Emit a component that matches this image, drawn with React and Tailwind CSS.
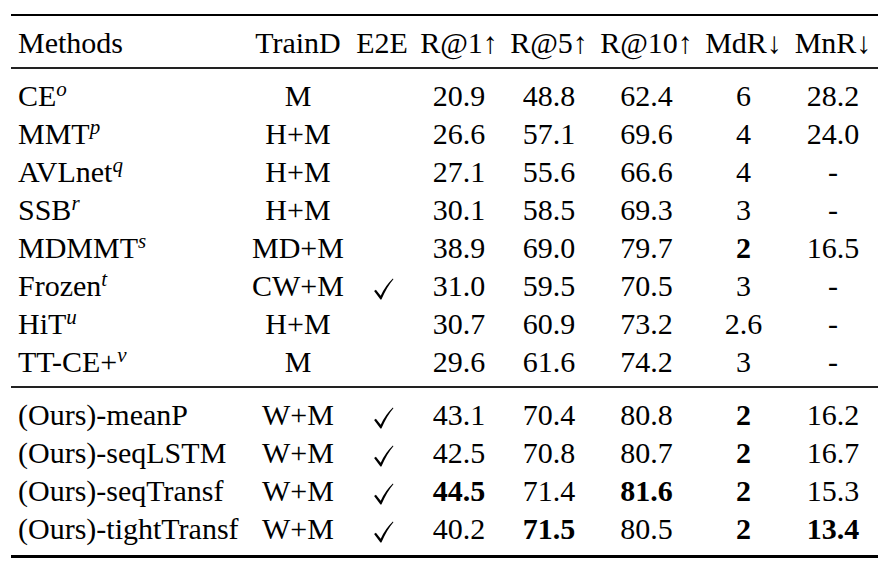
import React from 'react';

const Check = () => (
  <svg width="21" height="22" viewBox="0 0 20 22" className="inline-block">
    <path d="M0.6 13 L2.4 11.8 L7.2 17.8 Q12 7.5 19.4 0.6 L19.9 1.2 Q13.4 8.6 7.9 21.6 L6.9 21.6 Z" fill="#000" />
  </svg>
);

const prior = [
  { name: 'CE', sup: 'o', data: 'M', e2e: false, r1: '20.9', r5: '48.8', r10: '62.4', mdr: '6', mnr: '28.2' },
  { name: 'MMT', sup: 'p', data: 'H+M', e2e: false, r1: '26.6', r5: '57.1', r10: '69.6', mdr: '4', mnr: '24.0' },
  { name: 'AVLnet', sup: 'q', data: 'H+M', e2e: false, r1: '27.1', r5: '55.6', r10: '66.6', mdr: '4', mnr: '-' },
  { name: 'SSB', sup: 'r', data: 'H+M', e2e: false, r1: '30.1', r5: '58.5', r10: '69.3', mdr: '3', mnr: '-' },
  { name: 'MDMMT', sup: 's', data: 'MD+M', e2e: false, r1: '38.9', r5: '69.0', r10: '79.7', mdr: '2', mnr: '16.5', bold: ['mdr'] },
  { name: 'Frozen', sup: 't', data: 'CW+M', e2e: true, r1: '31.0', r5: '59.5', r10: '70.5', mdr: '3', mnr: '-' },
  { name: 'HiT', sup: 'u', data: 'H+M', e2e: false, r1: '30.7', r5: '60.9', r10: '73.2', mdr: '2.6', mnr: '-' },
  { name: 'TT-CE+', sup: 'v', data: 'M', e2e: false, r1: '29.6', r5: '61.6', r10: '74.2', mdr: '3', mnr: '-' },
];

const ours = [
  { name: '(Ours)-meanP', data: 'W+M', e2e: true, r1: '43.1', r5: '70.4', r10: '80.8', mdr: '2', mnr: '16.2', bold: ['mdr'] },
  { name: '(Ours)-seqLSTM', data: 'W+M', e2e: true, r1: '42.5', r5: '70.8', r10: '80.7', mdr: '2', mnr: '16.7', bold: ['mdr'] },
  { name: '(Ours)-seqTransf', data: 'W+M', e2e: true, r1: '44.5', r5: '71.4', r10: '81.6', mdr: '2', mnr: '15.3', bold: ['r1', 'r10', 'mdr'] },
  { name: '(Ours)-tightTransf', data: 'W+M', e2e: true, r1: '40.2', r5: '71.5', r10: '80.5', mdr: '2', mnr: '13.4', bold: ['r5', 'mdr', 'mnr'] },
];

const grid = 'grid grid-cols-[235px_104px_64px_90px_90px_105px_89px_90px] h-[38px] leading-[38px] whitespace-nowrap';

const Row = ({ row }) => {
  const b = (k) => (row.bold && row.bold.includes(k) ? 'font-bold' : '');
  return (
    <div className={grid}>
      <div className="pl-[7px]">
        {row.name}
        {row.sup && <sup className="italic text-[21px]">{row.sup}</sup>}
      </div>
      <div className="text-center">{row.data}</div>
      <div className="text-center pl-[3px]">{row.e2e && <Check />}</div>
      <div className={`text-center ${b('r1')}`}>{row.r1}</div>
      <div className={`text-center ${b('r5')}`}>{row.r5}</div>
      <div className={`text-center ${b('r10')}`}>{row.r10}</div>
      <div className={`text-center ${b('mdr')}`}>{row.mdr}</div>
      <div className={`text-center ${b('mnr')}`}>{row.mnr}</div>
    </div>
  );
};

export default function App() {
  return (
    <div className="w-[891px] h-[571px] bg-white text-black pt-[14px] pl-[11px] font-['Liberation_Serif','Times_New_Roman',serif] text-[30px]">
      <div className="w-[867px]">
        {/* top rule */}
        <div className="h-[2px] bg-black" />

        {/* header */}
        <div className="pt-[8px] pb-[5px]">
          <div className={grid}>
            <div className="pl-[7px]">Methods</div>
            <div className="text-center">TrainD</div>
            <div className="text-center">E2E</div>
            <div className="text-center">R@1↑</div>
            <div className="text-center">R@5↑</div>
            <div className="text-center">R@10↑</div>
            <div className="text-center">MdR↓</div>
            <div className="text-center">MnR↓</div>
          </div>
        </div>
        <div className="h-[2px] bg-[#222]" />

        {/* prior work */}
        <div className="pt-[8px] pb-[5px]">
          {prior.map((r) => (
            <Row key={r.name} row={r} />
          ))}
        </div>
        <div className="h-[2px] bg-[#222]" />

        {/* ours */}
        <div className="pt-[8px] pb-[7px]">
          {ours.map((r) => (
            <Row key={r.name} row={r} />
          ))}
        </div>

        {/* bottom rule */}
        <div className="h-[3px] bg-black" />
      </div>
    </div>
  );
}
